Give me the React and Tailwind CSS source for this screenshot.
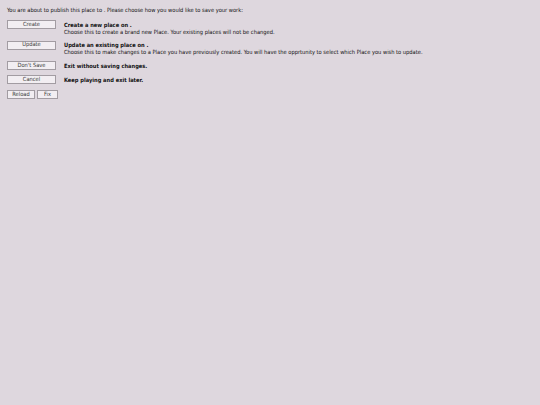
const OPTIONS = [
  {
    label: "Create",
    title: "Create a new place on .",
    desc: "Choose this to create a brand new Place. Your existing places will not be changed.",
  },
  {
    label: "Update",
    title: "Update an existing place on .",
    desc: "Choose this to make changes to a Place you have previously created. You will have the opprtunity to select which Place you wish to update.",
  },
  { label: "Don't Save", title: "Exit without saving changes." },
  { label: "Cancel", title: "Keep playing and exit later." },
];

function Btn({ children, className = "" }) {
  return (
    <button
      type="button"
      className={`h-[9px] flex items-center justify-center border border-[#a29ca2] bg-[#f2eef2] text-[5.7px] leading-none text-[#3a3a3a] ${className}`}
    >
      {children}
    </button>
  );
}

export default function App() {
  return (
    <div
      className="min-h-[405px] w-[540px] bg-[#ded7de] px-[7px] pt-[7px] text-[#111]"
      style={{ fontFamily: "'DejaVu Sans Condensed', 'DejaVu Sans', Verdana, sans-serif" }}
    >
      <p className="text-[5.7px] leading-[7px]">
        You are about to publish this place to . Please choose how you would like to save your work:
      </p>

      <div className="mt-[6px] flex flex-col gap-[5px]">
        {OPTIONS.map((o) => (
          <div key={o.label} className="flex items-start gap-[8px]">
            <Btn className="w-[49px] shrink-0">{o.label}</Btn>
            <div className="pt-[1.5px] text-[5.7px] leading-[7px]">
              <p className="font-bold">{o.title}</p>
              {o.desc && <p>{o.desc}</p>}
            </div>
          </div>
        ))}
      </div>

      <div className="mt-[6px] flex gap-[2px]">
        <Btn className="w-[28px]">Reload</Btn>
        <Btn className="w-[21px]">Fix</Btn>
      </div>
    </div>
  );
}
